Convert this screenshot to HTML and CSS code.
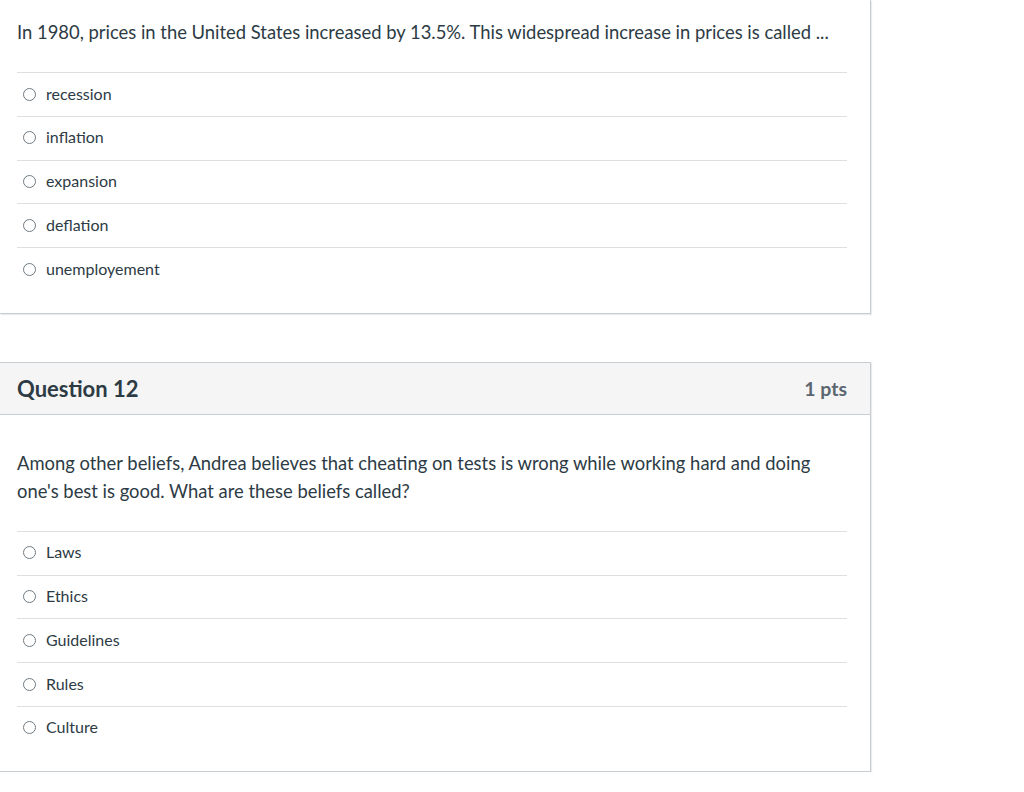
FILE: index.html
```html
<!DOCTYPE html>
<html lang="en">
<head>
<meta charset="utf-8">
<title>Quiz</title>
<link rel="stylesheet" href="styles.css">
</head>
<body>
<div class="quiz">
  <section class="card card--continued">
    <div class="card-body">
      <p class="question-text">In 1980, prices in the United States increased by 13.5%. This widespread increase in prices is called ...</p>
      <ul class="answers">
        <li class="answer"><span class="radio"></span><span class="label">recession</span></li>
        <li class="answer"><span class="radio"></span><span class="label">inflation</span></li>
        <li class="answer"><span class="radio"></span><span class="label">expansion</span></li>
        <li class="answer"><span class="radio"></span><span class="label">deflation</span></li>
        <li class="answer"><span class="radio"></span><span class="label">unemployement</span></li>
      </ul>
    </div>
  </section>

  <section class="card">
    <header class="card-header">
      <h2 class="q-title">Question 12</h2>
      <span class="q-points">1 pts</span>
    </header>
    <div class="card-body">
      <p class="question-text">Among other beliefs, Andrea believes that cheating on tests is wrong while working hard and doing one's best is good. What are these beliefs called?</p>
      <ul class="answers">
        <li class="answer"><span class="radio"></span><span class="label">Laws</span></li>
        <li class="answer"><span class="radio"></span><span class="label">Ethics</span></li>
        <li class="answer"><span class="radio"></span><span class="label">Guidelines</span></li>
        <li class="answer"><span class="radio"></span><span class="label">Rules</span></li>
        <li class="answer"><span class="radio"></span><span class="label">Culture</span></li>
      </ul>
    </div>
  </section>
</div>
</body>
</html>
```

FILE: styles.css
```css
html, body {
  margin: 0;
  padding: 0;
  background: #ffffff;
}

body {
  font-family: Lato, "Liberation Sans", sans-serif;
  color: #2d3b45;
}

.quiz {
  display: flex;
  flex-direction: column;
  gap: 48px;
  width: 871px;
}

.card {
  border: 1px solid #c7cdd1;
  border-left: none;
  background: #fff;
  box-shadow: 1px 1px 1px rgba(0, 0, 0, 0.08);
}

.card--continued {
  border-top: none;
}

.card-header {
  display: flex;
  justify-content: space-between;
  align-items: center;
  height: 50px;
  padding: 1px 23px 0 17px;
  background: #f5f5f5;
  border-bottom: 1px solid #c7cdd1;
}

.q-title {
  margin: 0;
  font-size: 22px;
  font-weight: 700;
  color: #2d3b45;
}

.q-points {
  font-size: 19.5px;
  font-weight: 700;
  color: #5b6770;
}

.card-body {
  padding: 34px 23px 21px 17px;
}

.card--continued .card-body {
  padding-top: 18px;
  padding-bottom: 22px;
}

.question-text {
  margin: 0 0 26px 0;
  font-size: 18.4px;
  line-height: 28px;
}

.answers {
  list-style: none;
  margin: 0;
  padding: 0;
}

.answer {
  display: flex;
  align-items: center;
  border-top: 1px solid #dde0e2;
  padding: 9.5px 0 11.25px;
  line-height: 22px;
  font-size: 16px;
}

.radio {
  width: 11px;
  height: 11px;
  border: 1px solid #6f7b83;
  border-radius: 50%;
  margin: 1px 10px 0 6px;
  flex: none;
}
```
